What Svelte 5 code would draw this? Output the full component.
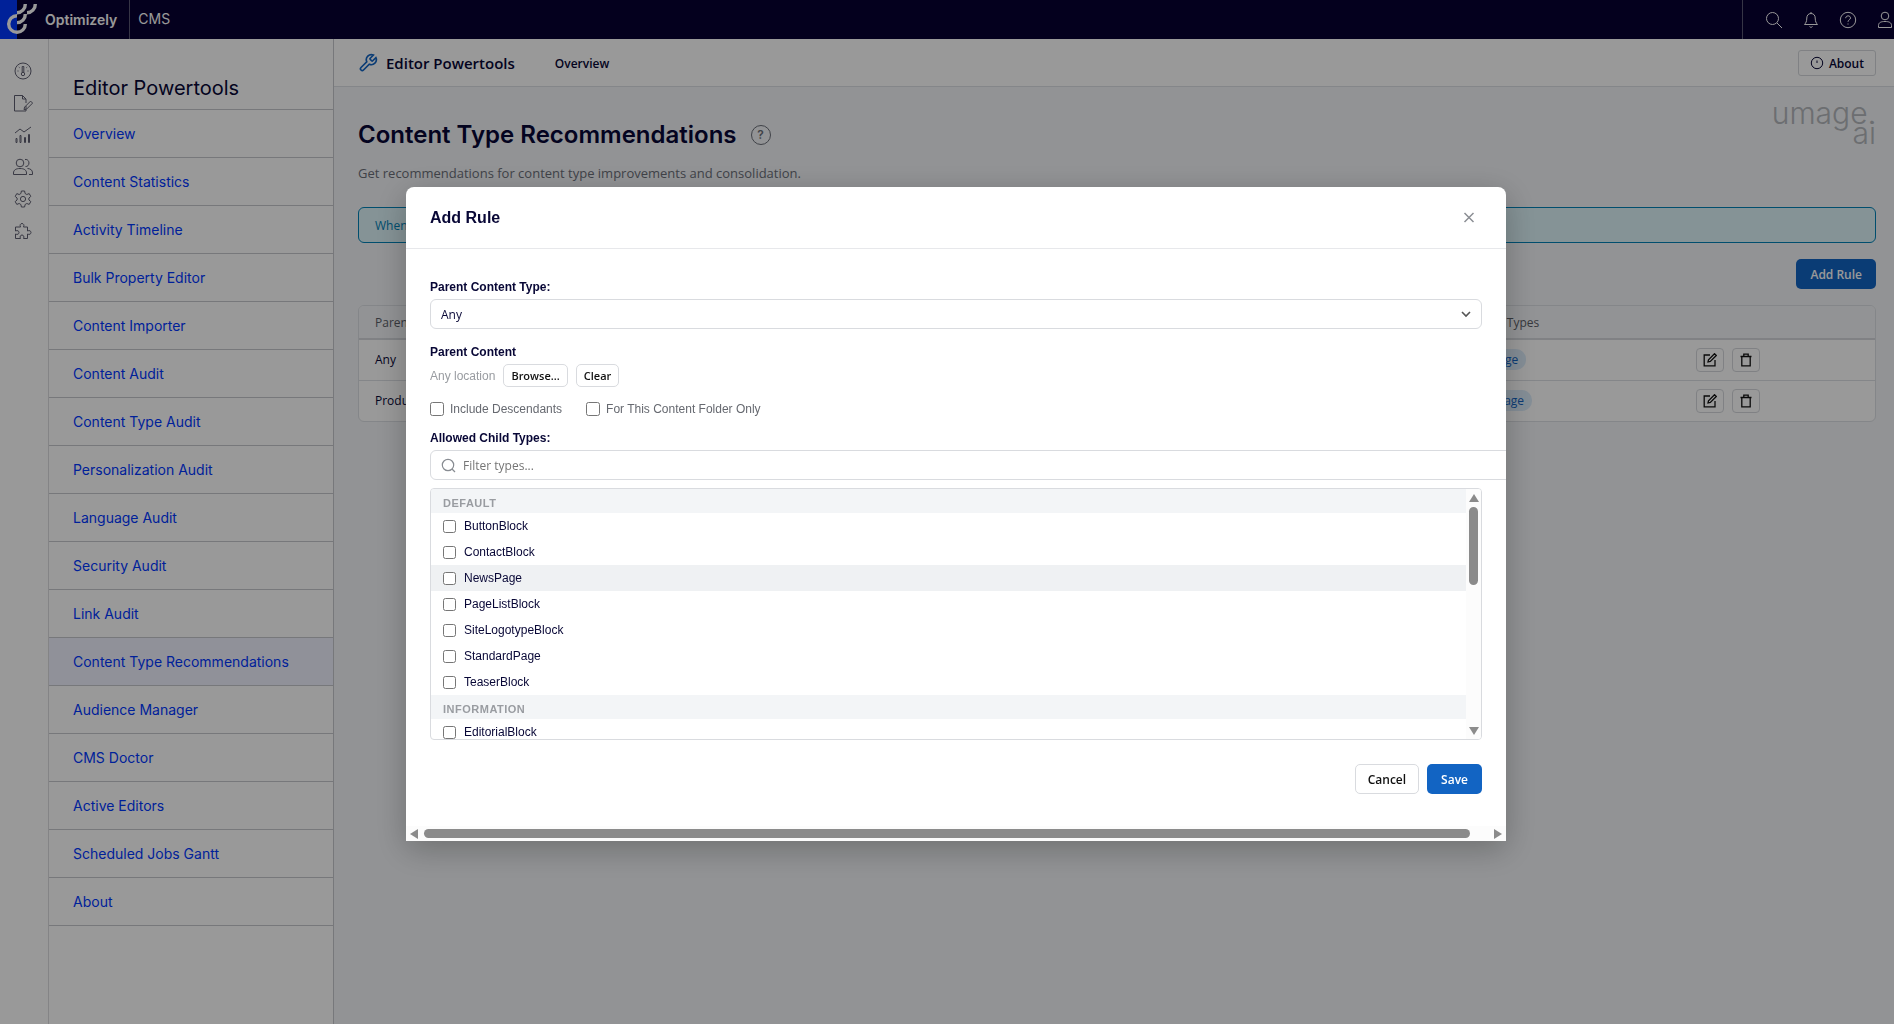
<script>
  const menu = [
    "Overview",
    "Content Statistics",
    "Activity Timeline",
    "Bulk Property Editor",
    "Content Importer",
    "Content Audit",
    "Content Type Audit",
    "Personalization Audit",
    "Language Audit",
    "Security Audit",
    "Link Audit",
    "Content Type Recommendations",
    "Audience Manager",
    "CMS Doctor",
    "Active Editors",
    "Scheduled Jobs Gantt",
    "About",
  ];

  const rules = [
    { parent: "Any", child: "ContainerPage" },
    { parent: "ProductPage", child: "CollectionsPage" },
  ];

  const groups = [
    {
      name: "Default",
      types: [
        "ButtonBlock",
        "ContactBlock",
        "NewsPage",
        "PageListBlock",
        "SiteLogotypeBlock",
        "StandardPage",
        "TeaserBlock",
      ],
    },
    { name: "Information", types: ["EditorialBlock"] },
  ];

  let active = "Content Type Recommendations";
  let hovered = "NewsPage";
  let parentType = "Any";
  let filter = "";
  let descendants = false;
  let folderOnly = false;
</script>

<div class="page">
  <header class="topbar">
    <a class="logo" href="/" aria-label="Optimizely home">
      <svg width="40" height="39" viewBox="0 0 40 39">
        <path d="M0 0h17v39H0z" fill="#0037ff" />
        <g fill="none" stroke="#fff" stroke-width="3.4">
          <path d="M17 15.700A8.300 8.300 0 1 0 25.300 24" />
          <path d="M17 22.600A8.300 8.300 0 0 0 25.300 14" />
          <path d="M17 12.700A8.500 8.500 0 0 0 25.300 4" />
          <path d="M27 12.700A8.500 8.500 0 0 0 35.300 4" />
        </g>
      </svg>
      <span>Optimizely</span>
    </a>
    <span class="product">CMS</span>
    <div class="tools">
      <button aria-label="Search">
        <svg width="18" height="18" viewBox="0 0 18 18"><circle cx="7.500" cy="7.500" r="6" /><path d="m12 12 5 5" /></svg>
      </button>
      <button aria-label="Notifications">
        <svg width="18" height="18" viewBox="0 0 18 18"><path d="M9 1v1.500M9 2.500C6.200 2.500 4.800 4.600 4.800 7c0 3.600-1 5-2.300 6.500h13C14.200 12 13.200 10.600 13.200 7c0-2.400-1.400-4.500-4.200-4.500zM7.500 15.500c.6 1 2.400 1 3 0" /></svg>
      </button>
      <button aria-label="Help">
        <svg width="18" height="18" viewBox="0 0 18 18"><circle cx="9" cy="9" r="7.700" /><path d="M6.700 7.200C6.700 4 11.500 4.200 11.500 7c0 1.800-2.500 1.800-2.500 3.800M9 12.500v1" /></svg>
      </button>
      <button aria-label="Account">
        <svg width="18" height="18" viewBox="0 0 18 18"><circle cx="9" cy="5" r="3.800" /><path d="M2.500 16.500v-2c0-3 2.500-4 6.500-4s6.500 1 6.500 4v2z" /></svg>
      </button>
    </div>
  </header>

  <div class="shell">
    <nav class="rail" aria-label="Sections">
      <a href="#dashboard" aria-label="Dashboard">
        <svg width="20" height="20" viewBox="0 0 20 20"><circle cx="10" cy="10" r="8" /><circle cx="10" cy="13" r="1.700" /><path d="M9.200 11.500V5.500h1.600v6M4.500 10h1M14.500 10h1M5.800 6l.8.7M14.200 6l-.8.7" /></svg>
      </a>
      <a href="#content" aria-label="Content">
        <svg width="20" height="20" viewBox="0 0 20 20"><path d="M13 13v5H1.500V2.500h8L13 6v4M9.500 2.500V6H13M11 16.700l.6-2.600 6-6 2 2-6 6z" /></svg>
      </a>
      <a href="#reports" aria-label="Reports">
        <svg width="20" height="20" viewBox="0 0 20 20"><path d="m2 8 5-4 4 3 7-5M3 17.500v-4h1v4zM7 17.500v-7h1v7zM11.500 17.500v-5h1v5zM15.500 17.500v-8h1v8z" /></svg>
      </a>
      <a href="#audiences" aria-label="Audiences">
        <svg width="20" height="20" viewBox="0 0 20 20"><circle cx="7" cy="6" r="3.800" /><path d="M.5 17.500V16c0-3 2.500-4.500 6.500-4.500s6.500 1.500 6.500 4.500v1.500zM12 2.500c5.200-.8 5.200 7.500.5 7M14.500 11.500c3 .2 5 1.500 5 4.500v1.500H16" /></svg>
      </a>
      <a href="#settings" aria-label="Settings">
        <svg width="20" height="20" viewBox="0 0 20 20"><circle cx="10" cy="10" r="2.600" /><path d="M8.400 2h3.200l.5 2.500 1.700 1 2.400-.9 1.600 2.800-1.900 1.600v2l1.900 1.600-1.600 2.800-2.400-.9-1.700 1-.5 2.500H8.400l-.5-2.500-1.700-1-2.400.9-1.600-2.800L4.100 11V9L2.200 7.400l1.600-2.800 2.400.9 1.700-1z" /></svg>
      </a>
      <a href="#addons" aria-label="Add-ons">
        <svg width="20" height="20" viewBox="0 0 20 20"><path d="M2.500 6h5c-1-2 0-3.500 1.500-3.500S11.500 4 10.500 6h4v4c2-1 3.500 0 3.500 1.500S16.500 14 14.500 13v4.500h-4c1-2 0-3.500-1.500-3.500s-2.500 1.500-1.500 3.500h-5V13c2 1 3.500 0 3.500-1.500S4.500 9 2.500 10z" /></svg>
      </a>
    </nav>

    <nav class="menu" aria-label="Editor Powertools">
      <h2>Editor Powertools</h2>
      {#each menu as item}
        <a href="#{item}" class:active={item === active}>{item}</a>
      {/each}
    </nav>

    <main>
      <div class="toolbar">
        <svg class="wrench" width="20" height="20" viewBox="0 0 24 24"><path d="M14.700 6.300a1 1 0 0 0 0 1.400l1.600 1.600a1 1 0 0 0 1.400 0l3.770-3.770a6 6 0 0 1-7.940 7.940l-6.910 6.910a2.120 2.120 0 0 1-3-3l6.910-6.910a6 6 0 0 1 7.940-7.940z" /></svg>
        <strong>Editor Powertools</strong>
        <a href="#Overview">Overview</a>
        <button class="about">
          <svg width="14" height="14" viewBox="0 0 14 14"><circle cx="7" cy="7" r="5.700" /><path d="M7 4.500v2.500" /></svg>
          About
        </button>
      </div>

      <div class="content">
        <div class="heading">
          <div>
            <h1>Content Type Recommendations <button class="help" aria-label="Help">?</button></h1>
            <p>Get recommendations for content type improvements and consolidation.</p>
          </div>
          <div class="brand">umage.<br />ai</div>
        </div>

        <div class="notice">When</div>
        <div class="actions">
          <button class="primary">Add Rule</button>
        </div>

        <div class="card">
          <table>
            <thead>
              <tr>
                <th>Parent Content Type</th>
                <th class="child">Allowed Child Types</th>
                <th class="buttons" aria-label="Actions"></th>
              </tr>
            </thead>
            <tbody>
              {#each rules as rule}
                <tr>
                  <td>{rule.parent}</td>
                  <td><span class="badge">{rule.child}</span></td>
                  <td>
                    <div class="row-buttons">
                      <button aria-label="Edit rule">
                        <svg width="14" height="14" viewBox="0 0 14 14"><path d="M7 2H1.200v10.800H12V7M5 9l.5-2.300 6-6 1.800 1.800-6 6z" /></svg>
                      </button>
                      <button aria-label="Delete rule">
                        <svg width="14" height="14" viewBox="0 0 14 14"><path d="M1.500 3.500h11M2.800 3.500v9.300h8.400V3.500M4.800 3.500V1.200h4.400v2.300" /></svg>
                      </button>
                    </div>
                  </td>
                </tr>
              {/each}
            </tbody>
          </table>
        </div>
      </div>
    </main>
  </div>
</div>

<div class="overlay">
  <div class="dialog" role="dialog" aria-modal="true" aria-labelledby="dialog-title">
    <div class="dialog-header">
      <h3 id="dialog-title">Add Rule</h3>
      <button class="close" aria-label="Close">
        <svg width="12" height="12" viewBox="0 0 12 12"><path d="m1.500 1 9 9M10.500 1l-9 9" /></svg>
      </button>
    </div>

    <form class="dialog-body" on:submit|preventDefault>
      <label class="title" for="parent-type">Parent Content Type:</label>
      <select id="parent-type" bind:value={parentType}>
        <option>Any</option>
      </select>

      <span class="title second">Parent Content</span>
      <div class="location">
        <span>Any location</span>
        <button type="button">Browse...</button>
        <button type="button">Clear</button>
      </div>

      <div class="checks">
        <label><input type="checkbox" bind:checked={descendants} />Include Descendants</label>
        <label><input type="checkbox" bind:checked={folderOnly} />For This Content Folder Only</label>
      </div>

      <label class="title" for="filter">Allowed Child Types:</label>
      <input id="filter" class="filter" type="text" placeholder="Filter types..." bind:value={filter} />

      <div class="types">
        <div class="list">
          {#each groups as group}
            <h4>{group.name}</h4>
            {#each group.types as type}
              <label class:hovered={type === hovered}><input type="checkbox" />{type}</label>
            {/each}
          {/each}
        </div>
        <div class="vbar" aria-hidden="true">
          <svg width="10" height="8" viewBox="0 0 10 8"><path d="M5 0 10 8H0z" /></svg>
          <i></i>
          <svg width="10" height="8" viewBox="0 0 10 8"><path d="M5 8 10 0H0z" /></svg>
        </div>
      </div>

      <div class="footer">
        <button type="button" class="cancel">Cancel</button>
        <button type="submit" class="primary">Save</button>
      </div>
    </form>

    <div class="hbar" aria-hidden="true">
      <svg width="8" height="10" viewBox="0 0 8 10"><path d="M0 5 8 0v10z" /></svg>
      <i></i>
      <svg width="8" height="10" viewBox="0 0 8 10"><path d="M8 5 0 0v10z" /></svg>
    </div>
  </div>
</div>

<style>
  :global(body) {
    background: #f3f5f8;
    color: #080736;
    font-family: "Open Sans", sans-serif;
    font-size: 12px;
    overflow: hidden;
  }

  * {
    box-sizing: border-box;
  }

  a {
    color: inherit;
    text-decoration: none;
  }

  button {
    font: inherit;
    color: inherit;
    padding: 0;
    background: none;
    border: 0;
    cursor: pointer;
  }

  svg {
    display: block;
    fill: none;
    stroke: currentColor;
  }

  .page {
    display: flex;
    flex-direction: column;
    min-height: 100vh;
  }

  .topbar {
    display: flex;
    height: 39px;
    background: #080033;
    color: #fff;
    font-family: Inter, sans-serif;
  }

  .logo {
    display: flex;
    align-items: center;
    gap: 5px;
    padding-right: 12px;
    border-right: 1px solid #5b5976;
    font-size: 14px;
    font-weight: 600;
  }

  .logo svg {
    stroke: none;
  }

  .product {
    padding-left: 8px;
    font-size: 14px;
    line-height: 38px;
  }

  .tools {
    display: flex;
    flex: none;
    width: 152px;
    margin-left: auto;
    padding-left: 22px;
    gap: 19px;
    border-left: 1px solid #5b5976;
    overflow: hidden;
  }

  .tools button {
    flex: none;
  }

  .shell {
    display: flex;
    flex: 1;
  }

  .rail {
    display: flex;
    flex-direction: column;
    gap: 12px;
    width: 49px;
    padding: 22px 0 0 13px;
    background: #fff;
    border-right: 1px solid #dcdce0;
    color: #606072;
  }

  .menu {
    width: 285px;
    background: #fff;
    border-right: 1px solid #c7c9cd;
    font-family: Inter, sans-serif;
    font-size: 14px;
  }

  .menu h2 {
    margin: 0;
    padding: 35px 24px 7px;
    border-bottom: 1px solid #c7c9cd;
    font-size: 20px;
    font-weight: 400;
    line-height: 28px;
  }

  .menu a {
    display: block;
    height: 48px;
    padding-left: 24px;
    border-bottom: 1px solid #c7c9cd;
    color: #0037ff;
    line-height: 48px;
  }

  .menu a.active {
    background: #f0f2ff;
  }

  main {
    flex: 1;
    min-width: 0;
  }

  .toolbar {
    display: flex;
    align-items: center;
    height: 48px;
    padding: 1px 18px 0 24px;
    background: #fff;
    border-bottom: 1px solid #dcdfe4;
  }

  .wrench {
    margin-right: 8px;
    color: #1264c3;
    stroke-width: 2;
  }

  .toolbar strong {
    margin-right: 40px;
    font-size: 15px;
    font-weight: 600;
  }

  .toolbar a {
    font-weight: 600;
  }

  .about {
    display: flex;
    align-items: center;
    gap: 5px;
    height: 26px;
    margin-left: auto;
    padding: 0 11px;
    border: 1px solid #d5d8dd;
    border-radius: 3px;
    font-weight: 600;
  }

  .content {
    padding: 16px 18px 0 24px;
  }

  .heading {
    display: flex;
    justify-content: space-between;
    height: 104px;
  }

  h1 {
    display: flex;
    align-items: center;
    gap: 14px;
    margin: 14px 0 10px;
    font-family: Inter, sans-serif;
    font-size: 24px;
    font-weight: 600;
    line-height: 36px;
  }

  .help {
    width: 20px;
    height: 20px;
    border: 1px solid #6b6f78;
    border-radius: 50%;
    color: #6b6f78;
    font-size: 12px;
    line-height: 18px;
  }

  .heading p {
    margin: 0;
    color: #6b6f78;
    font-size: 13px;
    line-height: 20px;
  }

  .brand {
    color: #b4b7bc;
    font-family: Inter, sans-serif;
    font-size: 30px;
    font-weight: 300;
    line-height: 20px;
    text-align: right;
  }

  .notice {
    height: 36px;
    padding-left: 16px;
    border: 1px solid #0082b8;
    border-radius: 6px;
    background: #def5fa;
    color: #0082b8;
    line-height: 36px;
  }

  .actions {
    display: flex;
    justify-content: flex-end;
    padding: 16px 0;
  }

  .primary,
  .cancel {
    height: 30px;
    padding: 0 14px;
    border-radius: 5px;
    font-weight: 600;
  }

  .primary {
    background: #1264c3;
    color: #fff;
  }

  .card {
    border: 1px solid #dcdfe4;
    border-radius: 6px;
    background: #fff;
    overflow: hidden;
  }

  table {
    width: 100%;
    table-layout: fixed;
    border-collapse: collapse;
  }

  th {
    height: 33px;
    padding: 0 16px;
    background: #f3f5f8;
    border-bottom: 2px solid #d5d8dd;
    color: #5c5f68;
    font-weight: 500;
    text-align: left;
  }

  td {
    height: 41px;
    padding: 0 16px;
    border-bottom: 1px solid #dcdfe4;
  }

  tbody tr:last-child td {
    border-bottom: 0;
  }

  .child {
    width: 268px;
  }

  .buttons {
    width: 195px;
  }

  .badge {
    padding: 2px 8px;
    border-radius: 10px;
    background: #dcecfa;
    color: #1264c3;
    font-weight: 500;
  }

  .row-buttons {
    display: flex;
    gap: 8px;
  }

  .row-buttons button {
    display: grid;
    place-items: center;
    width: 28px;
    height: 24px;
    border: 1px solid #d5d8dd;
    border-radius: 4px;
    color: #111;
  }

  .row-buttons svg {
    stroke-width: 1.3;
  }

  .overlay {
    position: fixed;
    inset: 0;
    display: flex;
    align-items: center;
    justify-content: center;
    padding: 4px 0 0 18px;
    background: rgba(0, 0, 0, 0.4);
  }

  .dialog {
    width: 1100px;
    max-width: 90%;
    background: #fff;
    border-radius: 8px 8px 0 0;
    box-shadow: 0 8px 32px rgba(0, 0, 0, 0.25);
    font-family: "Liberation Sans", Arial, sans-serif;
    overflow: hidden;
  }

  .dialog-header {
    display: flex;
    align-items: center;
    justify-content: space-between;
    height: 62px;
    padding: 0 23px 0 24px;
    border-bottom: 1px solid #e7e8eb;
  }

  .dialog-header h3 {
    margin: 0;
    font-size: 16px;
    line-height: 20px;
  }

  .close {
    padding: 8px;
    color: #8b8e94;
  }

  .close svg {
    stroke-width: 1.5;
  }

  .dialog-body {
    padding: 31px 24px 32px;
  }

  .title {
    display: block;
    font-weight: 700;
    line-height: 15px;
    margin-bottom: 4px;
  }

  .second {
    margin-top: 16px;
  }

  select,
  .filter {
    height: 30px;
    border: 1px solid #d9dbdf;
    border-radius: 6px;
    background: #fff;
    font-family: "Open Sans", sans-serif;
    font-size: 12px;
  }

  select {
    display: block;
    width: 100%;
    padding: 1px 10px 0;
    appearance: none;
    color: #080736;
    background: #fff
      url("data:image/svg+xml,%3Csvg xmlns='http://www.w3.org/2000/svg' width='12' height='12' fill='none' stroke='%23555' stroke-width='1.600'%3E%3Cpath d='m2 4 4 4 4-4'/%3E%3C/svg%3E")
      no-repeat right 9px center;
  }

  .location {
    display: flex;
    align-items: center;
    gap: 8px;
    color: #999ca1;
  }

  .location button {
    height: 23px;
    padding: 0 7px;
    border: 1px solid #d9dbdf;
    border-radius: 5px;
    color: #111;
    font-family: "Open Sans", sans-serif;
    font-size: 11px;
    font-weight: 600;
  }

  .checks {
    display: flex;
    gap: 24px;
    margin: 14px 0;
    color: #666970;
  }

  .checks label,
  .list label {
    display: flex;
    align-items: center;
  }

  .checks label {
    gap: 6px;
    line-height: 16px;
  }

  .checks input {
    width: 14px;
    height: 14px;
    margin: 0;
  }

  .filter {
    display: block;
    box-sizing: content-box;
    width: 100%;
    height: 28px;
    padding: 0 12px 0 32px;
    background: #fff
      url("data:image/svg+xml,%3Csvg xmlns='http://www.w3.org/2000/svg' width='15' height='15' fill='none' stroke='%23888c92' stroke-width='1.200'%3E%3Ccircle cx='7' cy='7' r='5.700'/%3E%3Cpath d='m11 11 3 3'/%3E%3C/svg%3E")
      no-repeat 10px center;
  }

  .filter::placeholder {
    color: #757575;
  }

  .types {
    display: flex;
    height: 252px;
    margin-top: 8px;
    border: 1px solid #d9dbdf;
    border-radius: 4px;
    overflow: hidden;
  }

  .list {
    flex: 1;
    overflow: hidden;
  }

  .list h4 {
    margin: 0;
    padding: 3px 12px 0;
    height: 24px;
    background: #f3f5f7;
    color: #999ca1;
    font-size: 11px;
    letter-spacing: 0.5px;
    line-height: 22px;
    text-transform: uppercase;
  }

  .list label {
    gap: 8px;
    height: 26px;
    padding-left: 12px;
  }

  .list label.hovered {
    background: #eff1f3;
  }

  .list input {
    width: 13px;
    height: 13px;
    margin: 0;
  }

  .vbar,
  .hbar {
    display: flex;
    align-items: center;
    background: #fcfcfc;
  }

  .vbar {
    flex-direction: column;
    justify-content: space-between;
    width: 15px;
    padding: 5px 0 4px;
  }

  .vbar svg,
  .hbar svg {
    fill: #8b8b8b;
    stroke: none;
  }

  .vbar i {
    width: 9px;
    height: 78px;
    margin: 5px 0 auto;
    border-radius: 5px;
    background: #8b8b8b;
  }

  .footer {
    display: flex;
    justify-content: flex-end;
    gap: 8px;
    margin-top: 24px;
    font-family: "Open Sans", sans-serif;
  }

  .cancel {
    padding: 0 12px;
    border: 1px solid #d9dbdf;
    color: #111;
  }

  .hbar {
    height: 15px;
    padding: 0 4px;
  }

  .hbar i {
    flex: 1;
    height: 9px;
    margin: 0 24px 0 6px;
    border-radius: 5px;
    background: #8b8b8b;
  }
</style>
